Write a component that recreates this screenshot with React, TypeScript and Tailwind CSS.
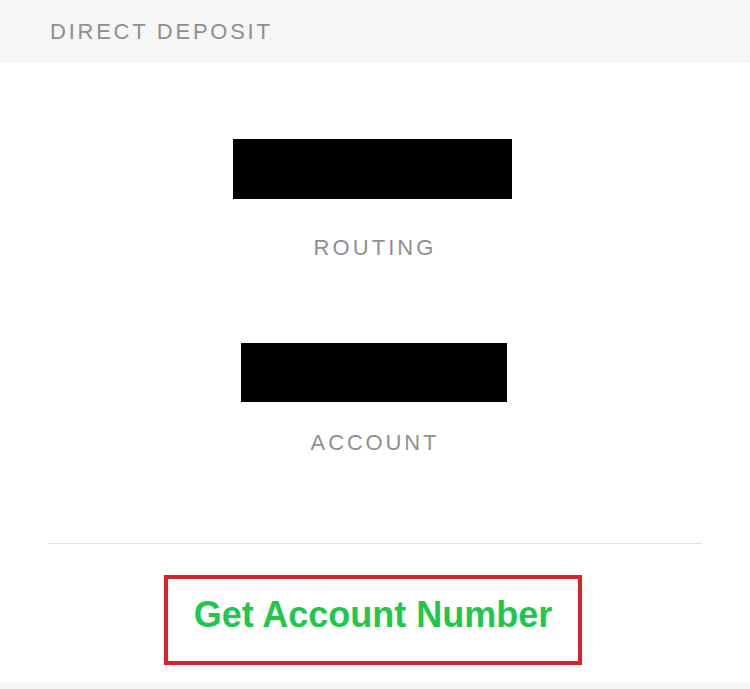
export default function App() {
  return (
    <div className="flex h-[689px] w-[750px] flex-col bg-white font-['Liberation_Sans',Arial,sans-serif]">
      <div className="flex h-[63px] items-center bg-[#f6f6f6] pl-[50px]">
        <span className="text-[22px] tracking-[0.125em] text-[#8f8f8f]">DIRECT DEPOSIT</span>
      </div>

      <div className="flex flex-col items-center">
        <div className="ml-[-6px] mt-[76px] h-[60px] w-[279px] bg-black" />
        <div className="mt-[36px] text-[22px] leading-[26px] tracking-[0.14em] text-[#8f8f8f]">ROUTING</div>

        <div className="ml-[-2px] mt-[82px] h-[59px] w-[266px] bg-black" />
        <div className="mt-[28px] text-[22px] leading-[26px] tracking-[0.13em] text-[#8f8f8f]">ACCOUNT</div>
      </div>

      <div className="mx-[48px] mt-[87px] h-px bg-[#e3e3e3]" />

      <div className="flex justify-center pt-[31px]">
        <div className="ml-[-4px] flex h-[90px] w-[418px] items-start justify-center border-4 border-[#d8222e] pt-[16px]">
          <span className="text-[36px] font-bold leading-[40px] text-[#1fc74b]">Get Account Number</span>
        </div>
      </div>

      <div className="mt-auto h-[6px] bg-[#f6f6f6]" />
    </div>
  )
}
